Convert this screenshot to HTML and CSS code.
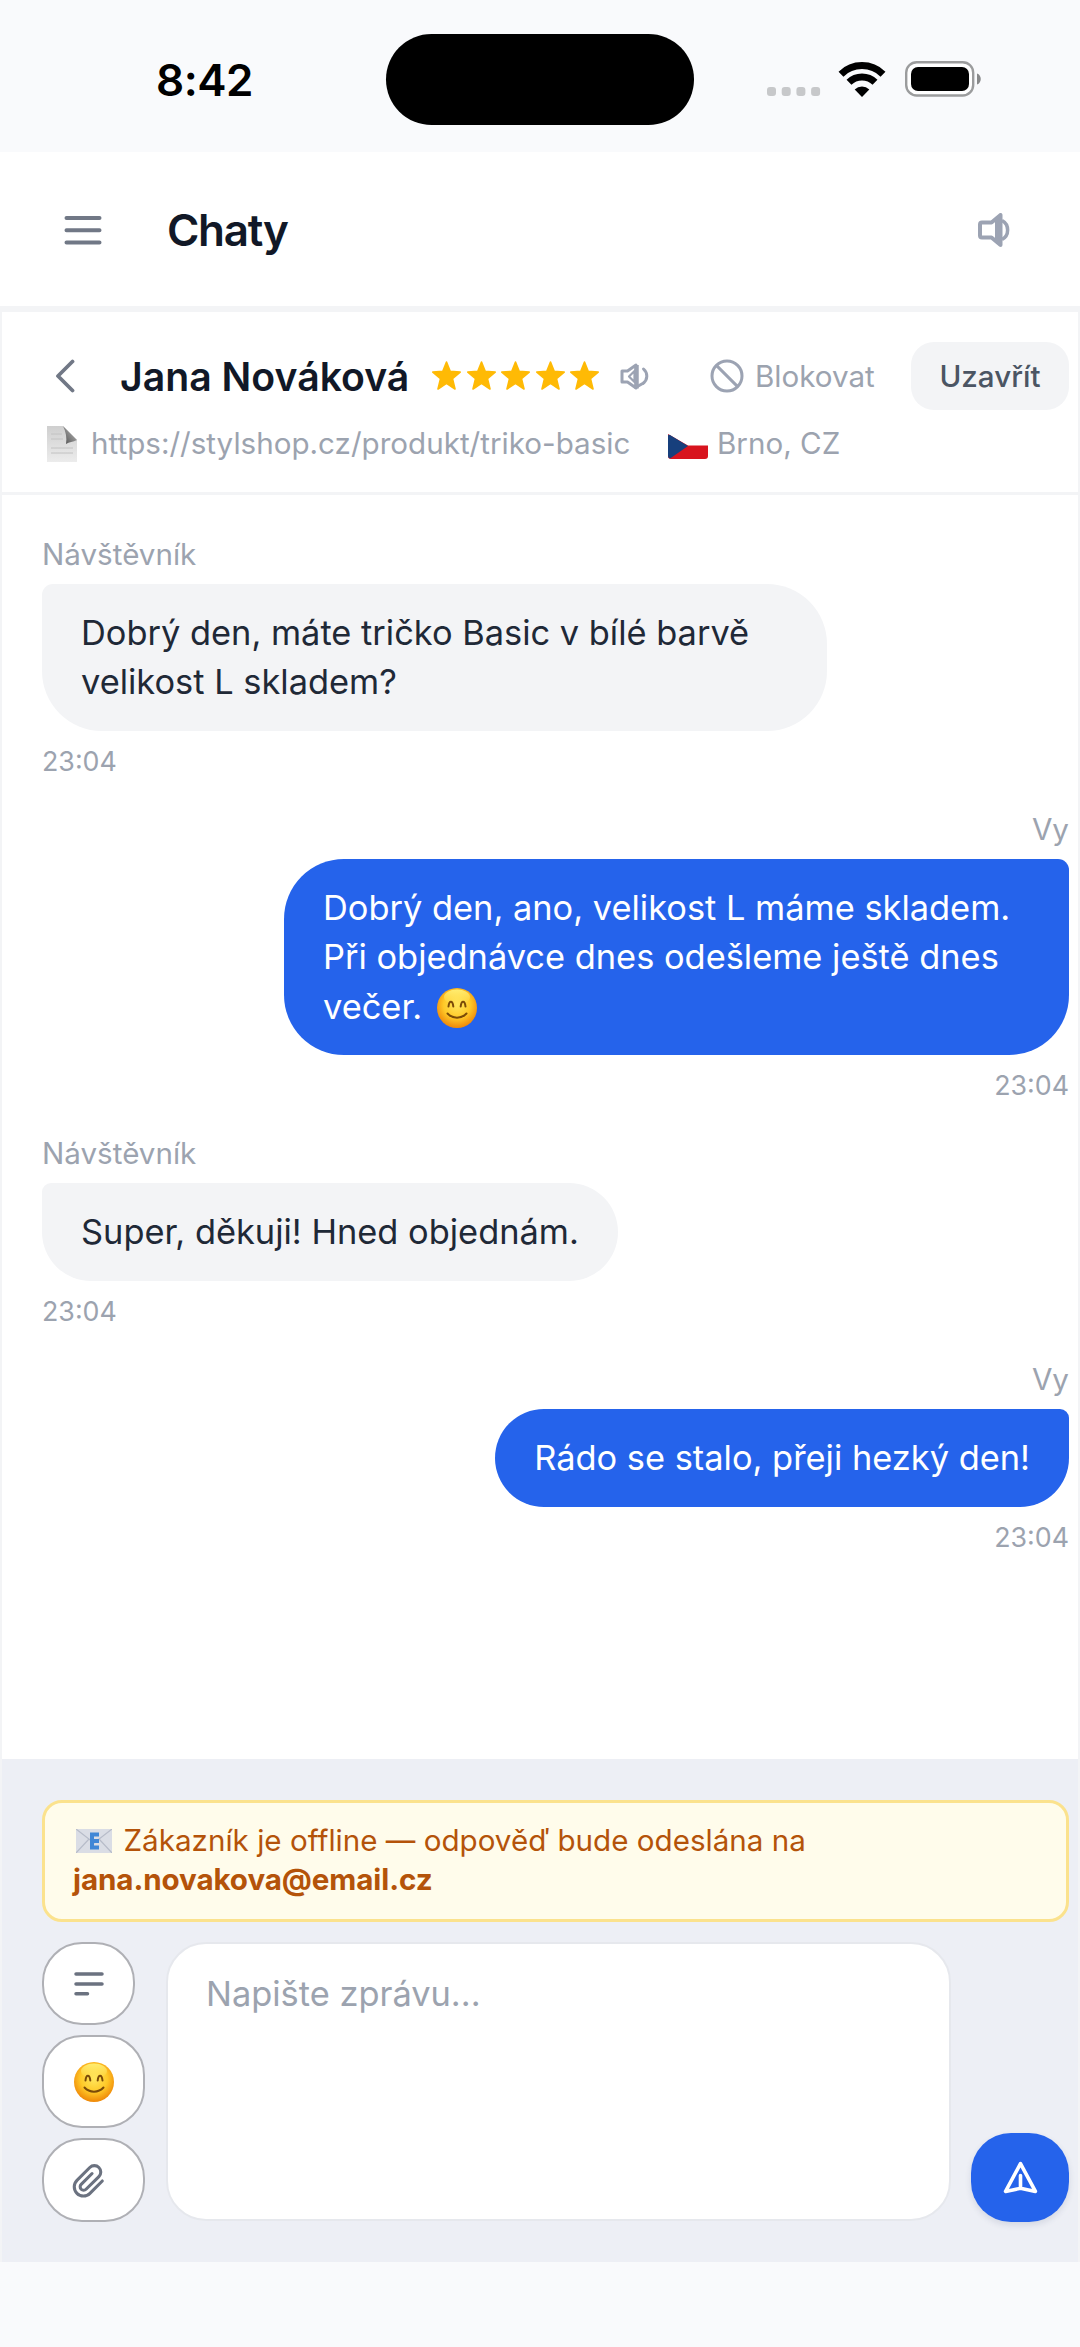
FILE: index.html
```
<!DOCTYPE html>
<html lang="cs">
<head>
<meta charset="utf-8">
<title>Chaty</title>
<link rel="stylesheet" href="styles.css">
</head>
<body>
<svg width="0" height="0" class="defs" aria-hidden="true">
  <defs>
    <radialGradient id="face" cx="50%" cy="42%" r="56%">
      <stop offset="0" stop-color="#ffe65c"/><stop offset=".6" stop-color="#ffc928"/><stop offset="1" stop-color="#f08c0a"/>
    </radialGradient>
    <linearGradient id="shine" x1="0" y1="0" x2="0" y2="1">
      <stop offset="0" stop-color="#fff27a" stop-opacity=".9"/><stop offset="1" stop-color="#fff27a" stop-opacity="0"/>
    </linearGradient>
    <linearGradient id="paper" x1="0" y1="0" x2="0" y2="1">
      <stop offset="0" stop-color="#cfcfcf"/><stop offset="1" stop-color="#ececec"/>
    </linearGradient>
    <linearGradient id="fold" x1="0" y1="1" x2="1" y2="0">
      <stop offset="0" stop-color="#4e4e4e"/><stop offset="1" stop-color="#c4c4c4"/>
    </linearGradient>
    <symbol id="smile" viewBox="0 0 40 40">
      <circle cx="20" cy="20" r="20" fill="url(#face)"/>
      <ellipse cx="20" cy="9" rx="13" ry="7.5" fill="url(#shine)"/>
      <path d="M11.5 18.5c.6-6.5 4.200-6.500 4.800 0M23.700 18.500c.6-6.500 4.200-6.500 4.800 0" fill="none" stroke="#7a4a08" stroke-width="2" stroke-linecap="round"/>
      <path d="M10.500 25.500c5 5.500 14 5.500 19 0" fill="none" stroke="#7a4a08" stroke-width="2" stroke-linecap="round"/>
    </symbol>
    <symbol id="star" viewBox="0 0 29 29">
      <path d="M14.500 1l3.700 9.400 10 .7-7.700 6.500 2.500 10.400-8.500-5.700L6 28l2.500-10.400L.8 11.100l10-.7z" fill="#ffba05" stroke="#ffba05" stroke-width="1.600" stroke-linejoin="round"/>
    </symbol>
  </defs>
</svg>

<div class="status">
  <span class="clock">8:42</span>
  <span class="island"></span>
  <svg class="signal" width="44" height="9" viewBox="0 0 44 9" fill="#c7c8ca"><rect width="9" height="9" rx="3"/><rect x="14.700" width="9" height="9" rx="3"/><rect x="29.400" width="9" height="9" rx="3"/><rect x="44.100" width="9" height="9" rx="3"/></svg>
  <svg class="wifi" width="48" height="35" viewBox="0 0 48 35"><g fill="none" stroke="#000" stroke-width="7"><path d="M3 12.200A30 30 0 0 1 45 12.200"/><path d="M11 20.300A18.500 18.500 0 0 1 37 20.300"/></g><path d="M24 35l-7.300-7.400a10.400 10.400 0 0 1 14.600 0z"/></svg>
  <svg class="battery" width="76" height="36" viewBox="0 0 76 36"><rect x="1.200" y="1.200" width="67" height="33.300" rx="10.500" fill="#fff" stroke="#9b9c9d" stroke-width="2.400"/><rect x="6" y="6" width="58" height="24" rx="7"/><path d="M72 12.500c5 1.500 5 9.500 0 11z" fill="#88898a"/></svg>
</div>

<header class="topbar">
  <svg class="menu" width="38" height="30" viewBox="0 0 38 30" stroke="#717886" stroke-width="4" stroke-linecap="round"><path d="M2.500 3h33M2.500 15.200h33M2.500 27.500h33"/></svg>
  <h1>Chaty</h1>
  <svg class="sound" width="32" height="34" viewBox="0 0 32 34" fill="none" stroke="#9ca3b3" stroke-width="4" stroke-linejoin="round"><path d="M2 11.500q0-2 2-2h9.500L22.500 2v30l-9-7.500H4q-2 0-2-2z"/><path d="M17 6h7v22h-7z" fill="#9ca3b3" stroke="none"/><path d="M24 7.500c7.500 4 7.500 15 0 19" stroke-width="3.500"/></svg>
</header>

<main class="chat">
  <section class="who">
    <div class="person">
      <svg class="back" width="20" height="34" viewBox="0 0 20 34" fill="none" stroke="#717886" stroke-width="3.800" stroke-linecap="round" stroke-linejoin="round"><path d="M17.500 2.500L3 17l14.500 14.500"/></svg>
      <h2>Jana Nováková</h2>
      <div class="stars"><svg><use href="#star"/></svg><svg><use href="#star"/></svg><svg><use href="#star"/></svg><svg><use href="#star"/></svg><svg><use href="#star"/></svg></div>
      <svg class="mini" width="29" height="27" viewBox="0 0 29 27" fill="none" stroke="#9ca3b3" stroke-width="3" stroke-linejoin="round"><path d="M2 8h5.500L16 2v23l-8.500-6H2z"/><path d="M14.500 8v11l-5.500-5.500z" stroke-width="2.200"/><path d="M16.500 2v23.500" stroke-width="4.500"/><path d="M16.500 24l7.500-4.200M23.500 6c4.500 4 4.500 10.500-.5 14.500" stroke-linecap="round"/></svg>
      <div class="block"><svg width="34" height="34" viewBox="0 0 34 34" fill="none" stroke="#9ca3b3" stroke-width="3"><circle cx="17" cy="17" r="15"/><path d="M6.400 6.400l21.200 21.200"/></svg><span>Blokovat</span></div>
      <button class="close">Uzavřít</button>
    </div>
    <div class="meta">
      <svg class="doc" width="31" height="36" viewBox="0 0 31 36"><path d="M0 0h16l14 14v22H0z" fill="url(#paper)"/><path d="M16 0l14 14c-4 2-8 2-11 4 1-6 0-12-3-18z" fill="url(#fold)"/><path d="M4 8h11M4 13h12M4 22h22M4 27h22" stroke="#c2c2c2" stroke-width="1"/></svg>
      <span class="url">https://stylshop.cz/produkt/triko-basic</span>
      <svg class="flag" width="40" height="25" viewBox="0 0 40 25"><path d="M0 0l20 11.500h20V22q0 3-3 3H3q-3 0-3-3z" fill="#d8141e"/><path d="M0 2q0-2 2-1l18 11L2 24.500Q0 24 0 22z" fill="#173f7c"/></svg>
      <span class="city">Brno, CZ</span>
    </div>
  </section>

  <section class="messages">
    <article class="msg">
      <div class="from">Návštěvník</div>
      <div class="bubble">Dobrý den, máte tričko Basic v bílé barvě<br>velikost L skladem?</div>
      <div class="time">23:04</div>
    </article>
    <article class="msg own">
      <div class="from">Vy</div>
      <div class="bubble">Dobrý den, ano, velikost L máme skladem.<br>Při objednávce dnes odešleme ještě dnes<br>večer. <svg class="emoji"><use href="#smile"/></svg></div>
      <div class="time">23:04</div>
    </article>
    <article class="msg">
      <div class="from">Návštěvník</div>
      <div class="bubble">Super, děkuji! Hned objednám.</div>
      <div class="time">23:04</div>
    </article>
    <article class="msg own">
      <div class="from">Vy</div>
      <div class="bubble">Rádo se stalo, přeji hezký den!</div>
      <div class="time">23:04</div>
    </article>
  </section>

  <section class="composer">
    <div class="notice"><svg class="mail" width="36" height="24" viewBox="0 0 36 24"><rect width="36" height="24" rx="1" fill="#dadde5"/><path d="M0 0l18 14L36 0M0 24l13-14M36 24L23 10" fill="none" stroke="#b7bcc9" stroke-width="1.200"/><path d="M23 5.500h-7v13h7M16 12h7" fill="none" stroke="#4187d6" stroke-width="4"/></svg>Zákazník je offline — odpověď bude odeslána na<br><b>jana.novakova@email.cz</b></div>
    <div class="row">
      <div class="tools">
        <button class="tool list"><svg width="32" height="26" viewBox="0 0 32 26" stroke="#6b7280" stroke-width="3.500" stroke-linecap="round"><path d="M3 3h26M3 13h26M3 22.800h11.500"/></svg></button>
        <button class="tool smiley"><svg width="40" height="40"><use href="#smile"/></svg></button>
        <button class="tool clip"><svg width="40" height="39" viewBox="0 0 24 24" fill="none" stroke="#6b7280" stroke-width="1.900" stroke-linecap="round" stroke-linejoin="round"><path d="M20.800 12.300l-7.600 7.600a5.600 5.600 0 0 1-8-8l7.900-7.900a3.900 3.900 0 0 1 5.600 5.600l-7.900 7.800a2.100 2.100 0 0 1-3-3l6.700-6.700"/></svg></button>
      </div>
      <div class="field">Napište zprávu...</div>
      <button class="send"><svg width="35" height="33" viewBox="0 0 34 32" fill="none" stroke="#fff" stroke-width="3.500" stroke-linecap="round" stroke-linejoin="round"><path d="M17 2.500L2.500 29.500 17 26.500l14.500 3zM17 26V14"/></svg></button>
    </div>
  </section>
</main>
</body>
</html>
```
FILE: styles.css
```
* { box-sizing: border-box; }
body { margin: 0; width: 1080px; height: 2347px; overflow: hidden; background: #f9fafc; font-family: Inter, "Liberation Sans", sans-serif; font-size: 29.6px; color: #9ca3af; }
.defs { position: absolute; }
h1, h2 { margin: 0; font-weight: 600; color: #111827; white-space: nowrap; }
button { font: inherit; padding: 0; border: 0; display: flex; align-items: center; justify-content: center; }
svg { display: block; flex: none; }

.status { display: flex; height: 152px; padding: 34px 0 0 156px; }
.clock { width: 230px; font-size: 44px; line-height: 92px; font-weight: 600; letter-spacing: -.5px; color: #000; }
.island { width: 308px; height: 91px; border-radius: 46px; background: #000; }
.signal { margin: 53px 0 0 73px; overflow: visible; }
.wifi { margin: 28px 0 0 27px; }
.battery { margin: 27px 0 0 19px; }

.topbar { display: flex; align-items: center; height: 160px; padding: 2px 70px 0 64px; background: #fff; border-bottom: 6px solid #f3f4f6; }
.topbar h1 { flex: 1; margin-left: 65px; font-size: 44px; letter-spacing: -1.300px; }

.chat { display: flex; flex-direction: column; height: 1950px; background: #fff; border: solid #f3f4f6; border-width: 0 2px; }
.who { height: 183px; padding: 30px 9px 0 40px; border-bottom: 3px solid #f3f4f6; }
.person { display: flex; align-items: center; height: 68px; }
.back { margin-left: 13px; }
.person h2 { width: 312px; margin-left: 45px; font-size: 39.200px; }
.stars { display: flex; gap: 5.500px; width: 167px; margin-top: -1px; }
.stars svg { width: 29px; height: 29px; }
.mini { margin-left: 21px; }
.block { display: flex; align-items: center; gap: 11px; margin-left: 61px; }
.close { width: 158px; height: 68px; margin-left: auto; border-radius: 23px; background: #f3f4f6; color: #4b5563; font-weight: 500; }
.meta { display: flex; align-items: center; height: 40px; margin-top: 13px; padding-left: 5px; }
.doc { margin-top: 2px; }
.url { width: 577px; margin-left: 13px; }
.flag { margin-top: 7px; }
.city { margin-left: 9px; }

.messages { display: flex; flex-direction: column; gap: 30px; height: 1264px; padding: 39px 9px 0 40px; }
.msg { display: flex; flex-direction: column; align-items: flex-start; }
.own { align-items: flex-end; }
.from { line-height: 40px; margin-bottom: 10px; }
.bubble { padding: 24.400px 39px; border-radius: 11px 60px 60px 60px; background: #f3f4f6; color: #1f2937; font-size: 34.400px; line-height: 49.100px; white-space: nowrap; }
.msg:first-child .bubble { width: 785px; }
.own .bubble { border-radius: 60px 11px 60px 60px; background: #2563eb; color: #fff; }
.own:nth-child(2) .bubble { width: 785px; }
.emoji { display: inline-block; width: 40px; height: 40px; margin: -9px 0 -9px 5px; vertical-align: 0; }
.time { margin-top: 12px; font-size: 26.800px; line-height: 36px; }

.composer { height: 503px; padding: 41px 9px 0 40px; background: #edeff5; }
.notice { height: 122px; padding: 18px 28px; border: 3px solid #fbe28d; border-radius: 20px; background: #fffceb; color: #b45309; line-height: 39.300px; }
.mail { display: inline-block; margin: 0 11.500px 0 3px; vertical-align: -2px; }
.notice b { letter-spacing: -.1px; }
.row { display: flex; margin-top: 20px; height: 280px; }
.tools { display: flex; flex-direction: column; align-items: flex-start; gap: 10px; width: 124px; }
.tool { border: 2px solid #afb0b5; border-radius: 40px; background: #fff; }
.list { width: 93px; height: 83px; }
.smiley { width: 103px; height: 93px; }
.clip { width: 103px; height: 84px; justify-content: flex-start; padding-left: 24px; }
.field { width: 785px; height: 279px; padding: 25px 38px 0; border: 2px solid #e6e8ed; border-radius: 40px; background: #fff; font-size: 34.400px; line-height: 49px; }
.send { width: 98px; height: 89px; margin: auto 0 0 auto; border-radius: 40px; background: #2563eb; box-shadow: 0 3px 6px rgba(30, 50, 100, .12); }
```
